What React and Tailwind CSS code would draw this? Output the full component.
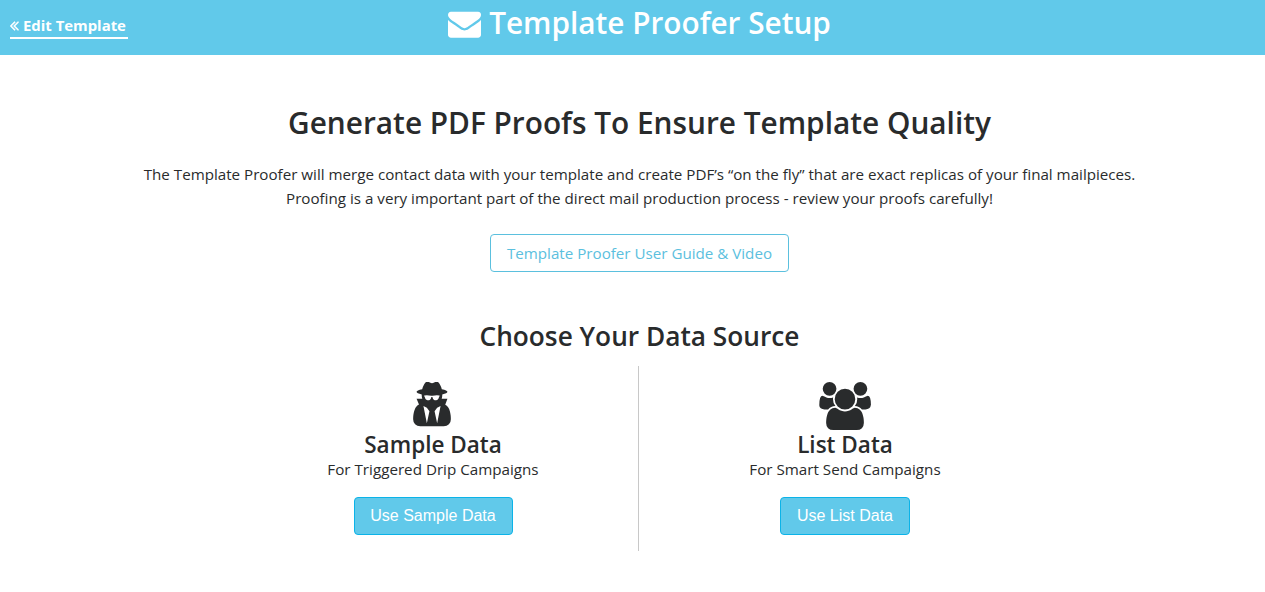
import React from 'react';

const EnvelopeIcon = ({ className }) => (
    <svg viewBox="0 0 1792 1792" fill="currentColor" className={className}>
        <path d="M1792 710v794q0 66-47 113t-113 47h-1472q-66 0-113-47t-47-113v-794q44 49 101 87 362 246 497 345 57 42 92.5 65.5t94.5 48 110 24.5h2q51 0 110-24.5t94.5-48 92.5-65.5q170-123 498-345 57-39 100-87zm0-294q0 79-49 151t-122 123q-376 261-468 325-10 7-42.5 31t-54 38.5-52 32.5-57.5 27-50 9h-2q-23 0-50-9t-57.5-27-52-32.5-54-38.5-42.5-31q-91-64-262-182.5t-205-142.5q-62-42-117-115.5t-55-136.5q0-78 41.5-130t118.5-52h1472q65 0 112.5 47t47.5 113z" />
    </svg>
);

const DoubleLeftIcon = ({ className }) => (
    <svg viewBox="420 480 1000 960" fill="currentColor" stroke="currentColor" strokeWidth="40" className={className}>
        <path d="M1011 1376q0 13-10 23l-50 50q-10 10-23 10t-23-10l-466-466q-10-10-10-23t10-23l466-466q10-10 23-10t23 10l50 50q10 10 10 23t-10 23l-393 393 393 393q10 10 10 23zm384 0q0 13-10 23l-50 50q-10 10-23 10t-23-10l-466-466q-10-10-10-23t10-23l466-466q10-10 23-10t23 10l50 50q10 10 10 23t-10 23l-393 393 393 393q10 10 10 23z" />
    </svg>
);

const SecretIcon = ({ className }) => (
    <svg viewBox="192 0 1408 1792" fill="currentColor" className={className}>
        <path d="M704 1536l96-448-96-128-128-64zm384 0l128-640-128 64-96 128zm92-1026q-2-4-4-6-10-8-96-8-70 0-167 19-7 2-21 2t-21-2q-97-19-167-19-86 0-96 8-2 2-4 6 2 18 4 27 2 3 7.5 6.5t7.5 10.5q2 4 7.5 20.5t7 20.5 7.5 17 8.5 17 9 14 12 13.5 14 9.5 17.5 8 20.5 4 24.5 2q36 0 59-12.5t32.5-30 14.5-34.5 11.5-29.5 17.5-12.5h12q11 0 17.5 12.5t11.5 29.5 14.5 34.5 32.5 30 59 12.5q13 0 24.5-2t20.5-4 17.5-8 14-9.5 12-13.5 9-14 8.5-17 7.5-17 7-20.5 7.5-20.5q2-7 7.5-10.5t7.5-6.5q2-9 4-27zm420 879q0 121-73 190t-194 69h-874q-121 0-194-69t-73-190q0-61 4.5-118t19-125.5 37.5-123.5 63.5-103.5 93.5-74.5l-90-220h214q-22-64-22-128 0-12 2-32-194-40-194-96 0-57 210-99 17-62 51.5-134t70.5-114q32-37 76-37 30 0 84 31t84 31 84-31 84-31q44 0 76 37 36 42 70.5 114t51.5 134q210 42 210 99 0 56-194 96 7 81-20 160h214l-82 225q63 33 107.5 96.5t65.5 143.5 29 151.5 8 148.5z" />
    </svg>
);

const UsersIcon = ({ className }) => (
    <svg viewBox="64 0 1920 1792" fill="currentColor" className={className}>
        <path d="M657 896q-162 5-265 128h-134q-82 0-138-40.5t-56-118.5q0-353 124-353 6 0 43.5 21t97.5 42.5 119 21.5q67 0 133-23-5 37-5 66 0 159 90 256zm1071 637q0 120-73 189.5t-194 69.5h-874q-121 0-194-69.5t-73-189.5q0-53 3.5-103.5t14-109 26.5-108.5 43-97.5 62-81 85.5-53.5 111.5-20q10 0 43 21.5t73 48 107 48 135 21.5 135-21.5 107-48 73-48 43-21.5q61 0 111.5 20t85.5 53.5 62 81 43 97.5 26.5 108.5 14 109 3.5 103.5zm-1024-1277q0 106-75 181t-181 75-181-75-75-181 75-181 181-75 181 75 75 181zm704 384q0 159-112.5 271.5t-271.5 112.5-271.5-112.5-112.5-271.5 112.5-271.5 271.5-112.5 271.5 112.5 112.5 271.5zm576 225q0 78-56 118.5t-138 40.5h-134q-103-123-265-128 90-97 90-256 0-29-5-66 66 23 133 23 59 0 119-21.5t97.5-42.5 43.5-21q124 0 124 353zm-128-609q0 106-75 181t-181 75-181-75-75-181 75-181 181-75 181 75 75 181z" />
    </svg>
);

const DataSource = ({ icon, title, note, action, className, buttonClass }) => (
    <div className={`flex flex-col items-center pt-4 h-[185px] ${className}`}>
        {icon}
        <h3 className="text-[22.5px] leading-[29px] font-semibold whitespace-nowrap">{title}</h3>
        <p className="-mt-0.5 text-[15.2px] leading-6 whitespace-nowrap">{note}</p>
        <button className={`mt-4 h-[38px] rounded bg-[#61c9ea] border border-[#0bb3e8] text-white text-base leading-6 font-['Liberation_Sans',sans-serif] whitespace-nowrap ${buttonClass}`}>
            {action}
        </button>
    </div>
);

const App = () => {
    return (
        <div className="min-h-[592px] bg-white text-[#292b2c] font-['Open_Sans','Noto_Sans',sans-serif]">
            <header className="h-[55px] bg-[#61c9ea] text-white grid grid-cols-[128px_1fr_114px] items-start">
                <a href="#" className="ml-[10px] mt-[14px] h-[25px] border-b-2 border-white flex items-center text-[14.9px] font-bold whitespace-nowrap">
                    <DoubleLeftIcon className="w-[9px] h-[10px] mr-1 shrink-0" />
                    Edit Template
                </a>
                <h1 className="flex items-center justify-center h-[46px] text-[29.75px] font-semibold whitespace-nowrap">
                    <EnvelopeIcon className="w-[33px] h-[33px] mr-2" />
                    Template Proofer Setup
                </h1>
            </header>

            <main className="pl-[14px] pt-[48px] flex flex-col items-center text-center">
                <h2 className="text-[29.8px] leading-10 font-semibold whitespace-nowrap">Generate PDF Proofs To Ensure Template Quality</h2>
                <p className="mt-[19px] text-[15.17px] leading-6 whitespace-nowrap">
                    The Template Proofer will merge contact data with your template and create PDF’s “on the fly” that are exact replicas of your final mailpieces.
                    <br />
                    Proofing is a very important part of the direct mail production process - review your proofs carefully!
                </p>
                <button className="mt-[24px] w-[299px] h-[38px] rounded border border-[#5bc0de] text-[#5bc0de] text-[15.17px] leading-6 whitespace-nowrap">
                    Template Proofer User Guide &amp; Video
                </button>

                <h2 className="mt-[47px] text-[26.25px] leading-[34px] font-semibold whitespace-nowrap">Choose Your Data Source</h2>
                <div className="mt-[13px] w-[823px] grid grid-cols-[411px_412px]">
                    <DataSource
                        icon={<SecretIcon className="w-[38px] h-12 mr-0.5" />}
                        title="Sample Data"
                        note="For Triggered Drip Campaigns"
                        action="Use Sample Data"
                        className="border-r border-[#c8c8c8]"
                        buttonClass="w-[159px]"
                    />
                    <DataSource
                        icon={<UsersIcon className="w-[52px] h-12" />}
                        title="List Data"
                        note="For Smart Send Campaigns"
                        action="Use List Data"
                        className=""
                        buttonClass="w-[130px]"
                    />
                </div>
            </main>
        </div>
    );
};

export default App;
